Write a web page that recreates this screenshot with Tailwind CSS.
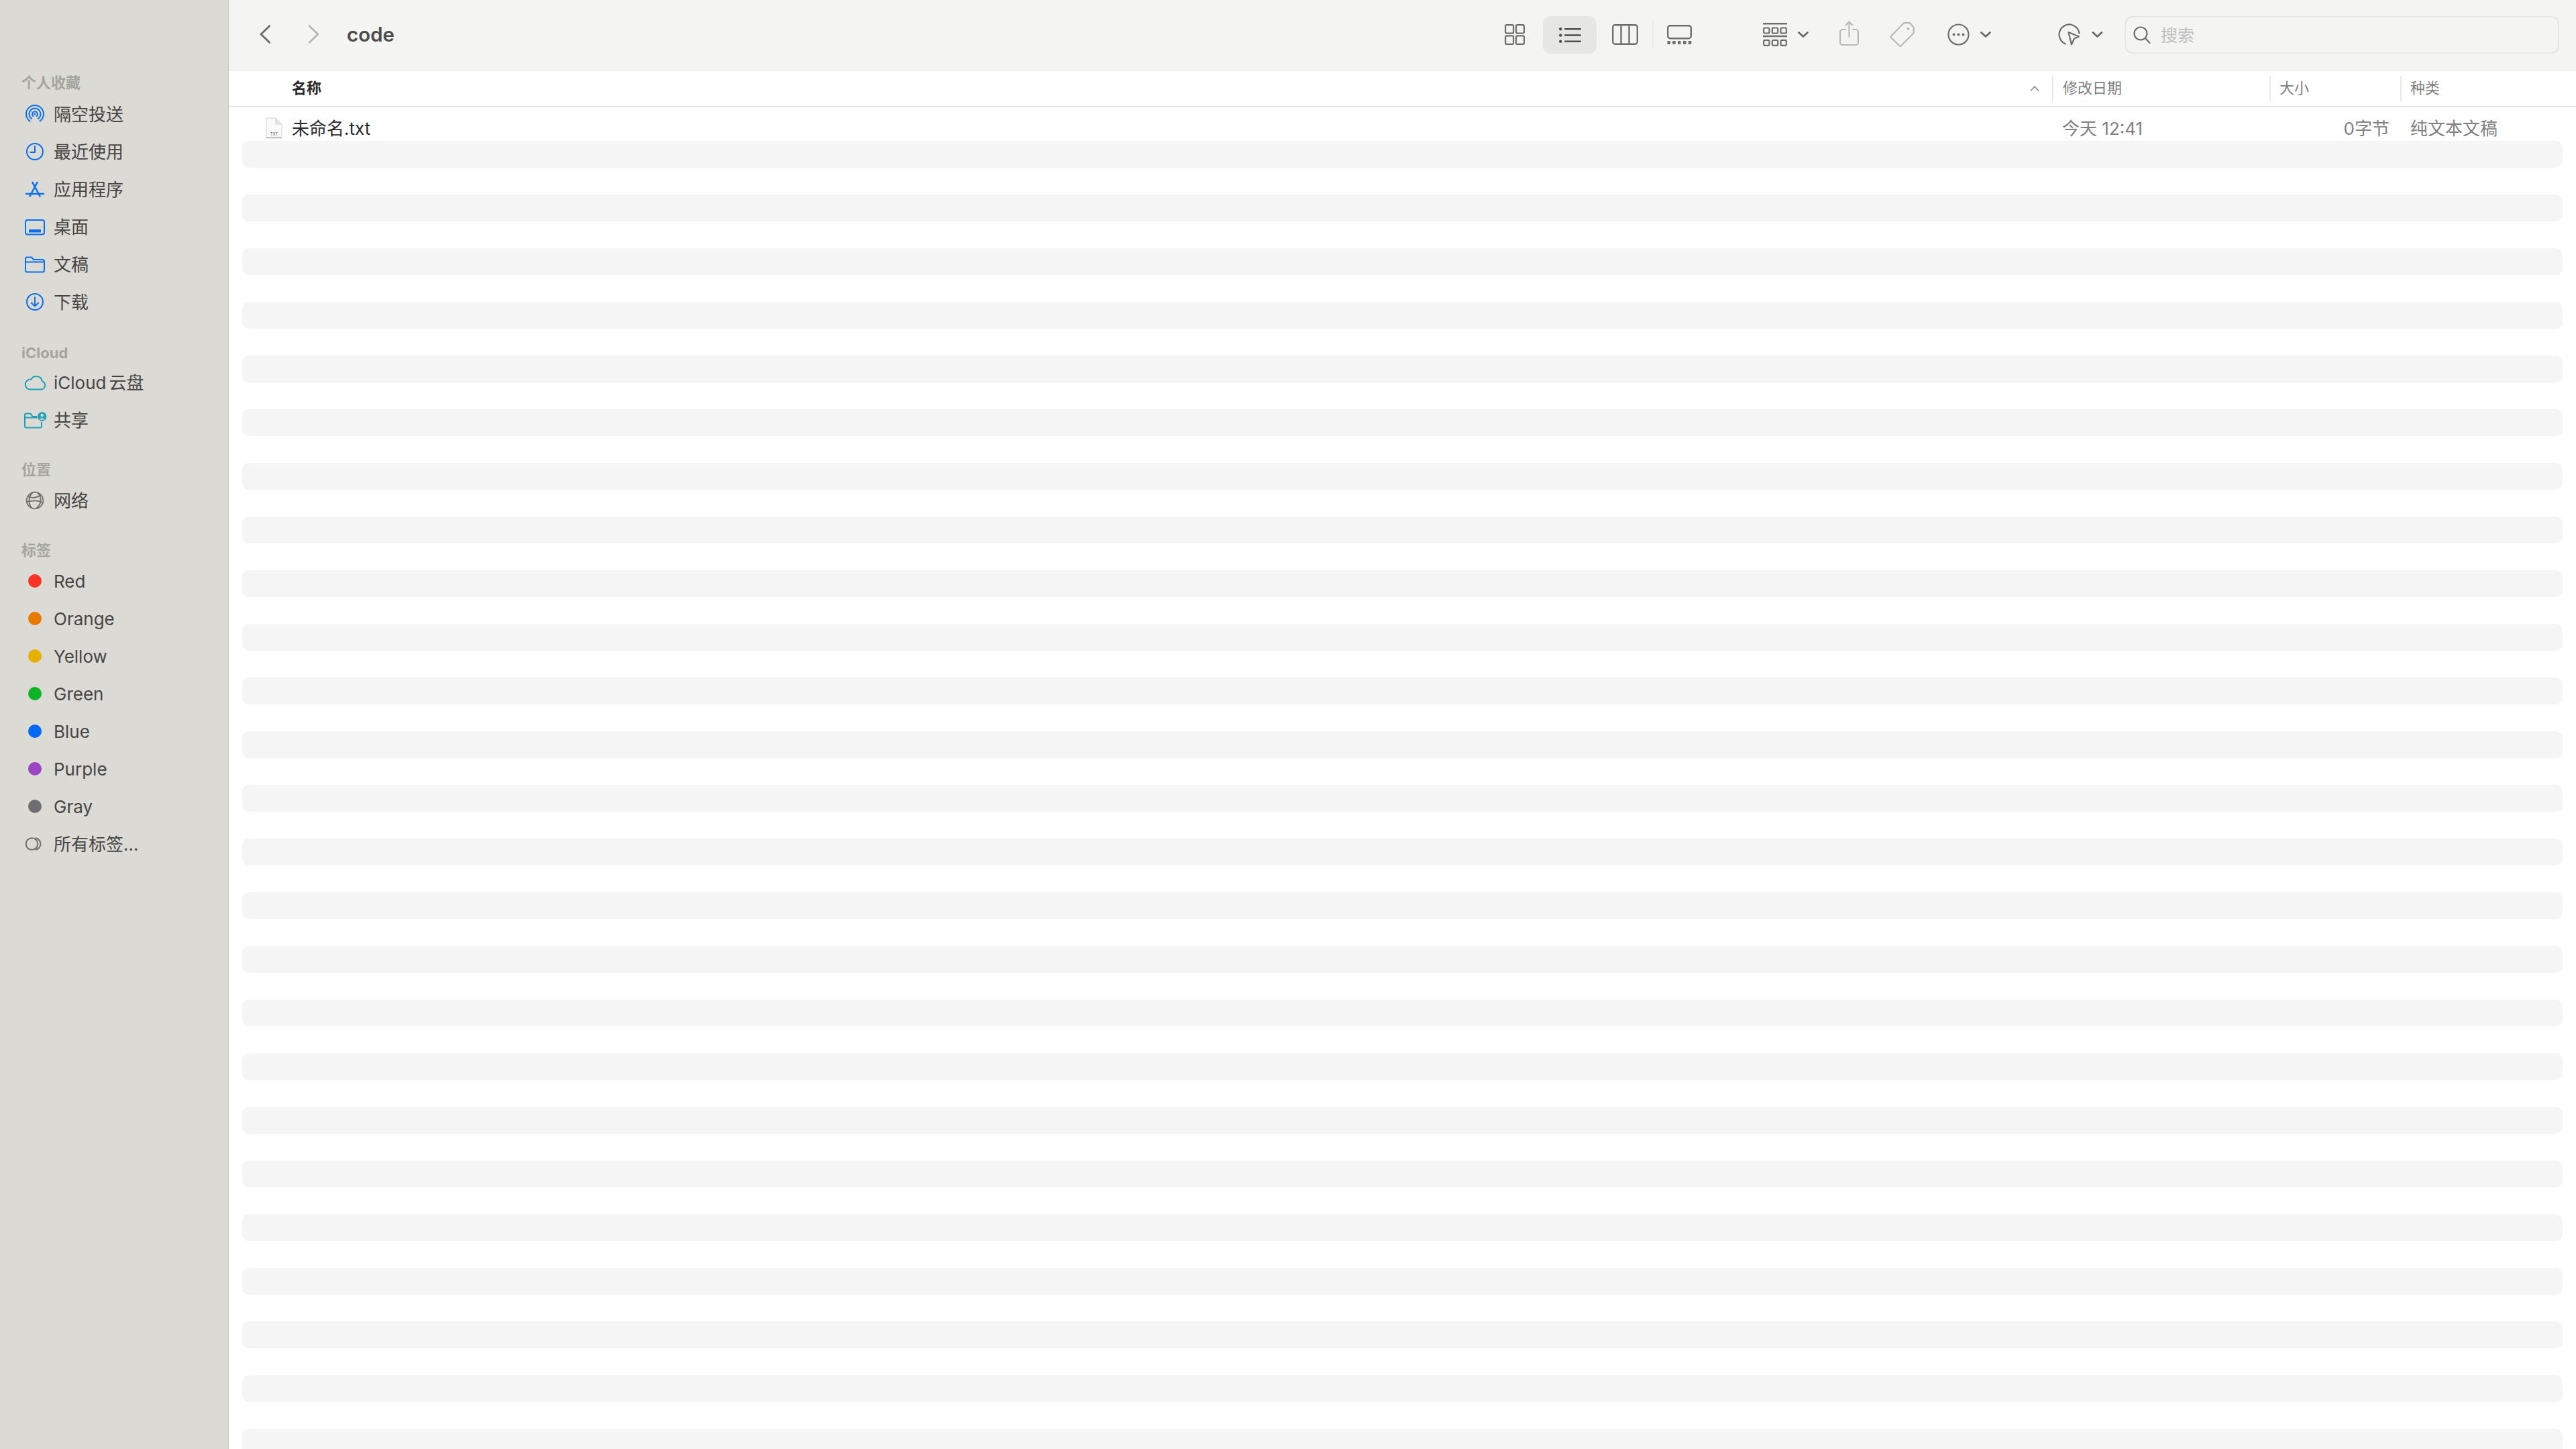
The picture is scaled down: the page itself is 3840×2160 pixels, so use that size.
<!DOCTYPE html>
<html lang="zh-CN">
<head>
<meta charset="UTF-8">
<title>code</title>
<script src="https://cdn.jsdelivr.net/npm/@tailwindcss/browser@4"></script>
</head>
<body class="bg-white h-[2160px] overflow-hidden flex font-['Inter','Noto_Sans_CJK_SC',sans-serif]">

<!-- Sidebar -->
<aside class="w-[341px] h-full shrink-0 bg-[#dbdad4] border-r border-[#c6c5be] pt-[107px] text-[26px] text-[#454543]">
  <div class="h-8 mb-[3px] pl-8 flex items-center text-[22px] font-bold text-[#a5a59f]">个人收藏</div>
  <div class="h-14 flex items-center">
    <svg class="ml-[34px] w-9 h-9 shrink-0" viewBox="0 0 36 36" fill="none" stroke="#0a6ff0" stroke-width="2" stroke-linecap="round"><path d="M10.5 28.6A13 13 0 1 1 25.5 28.6"/><path d="M13 24.9A8.5 8.5 0 1 1 23 24.9"/><path d="M15.4 21.2A4 4 0 1 1 20.6 21.2"/><circle cx="18" cy="18" r="1.6" fill="#0a6ff0" stroke="none"/></svg>
    <span class="ml-[10px]">隔空投送</span>
  </div>
  <div class="h-14 flex items-center">
    <svg class="ml-[34px] w-9 h-9 shrink-0" viewBox="0 0 36 36" fill="none" stroke="#0a6ff0" stroke-width="2" stroke-linecap="round" stroke-linejoin="round"><circle cx="18" cy="18" r="12"/><path d="M18 10V19H11.5"/></svg>
    <span class="ml-[10px]">最近使用</span>
  </div>
  <div class="h-14 flex items-center">
    <svg class="ml-[34px] w-9 h-9 shrink-0" viewBox="0 0 36 36" fill="none" stroke="#0a6ff0" stroke-width="2.6" stroke-linecap="round"><path d="M21.5 8L10.5 28.5"/><path d="M14.5 8L25.5 28.5"/><path d="M5 25H31"/></svg>
    <span class="ml-[10px]">应用程序</span>
  </div>
  <div class="h-14 flex items-center">
    <svg class="ml-[34px] w-9 h-9 shrink-0" viewBox="0 0 36 36" fill="none" stroke="#0a6ff0" stroke-width="2"><rect x="4" y="8" width="28" height="21.5" rx="3"/><rect x="9" y="22" width="18" height="4.5" rx="0.5" fill="#0a6ff0" stroke="none"/></svg>
    <span class="ml-[10px]">桌面</span>
  </div>
  <div class="h-14 flex items-center">
    <svg class="ml-[34px] w-9 h-9 shrink-0" viewBox="0 0 36 36" fill="none" stroke="#0a6ff0" stroke-width="2" stroke-linejoin="round"><path d="M4 10a2.5 2.5 0 0 1 2.5-2.5H13l3 3.5h13.5a2.5 2.5 0 0 1 2.5 2.5V27a2.5 2.5 0 0 1-2.5 2.5h-23A2.5 2.5 0 0 1 4 27Z"/><path d="M4 14.5H32"/></svg>
    <span class="ml-[10px]">文稿</span>
  </div>
  <div class="h-14 flex items-center">
    <svg class="ml-[34px] w-9 h-9 shrink-0" viewBox="0 0 36 36" fill="none" stroke="#0a6ff0" stroke-width="2" stroke-linecap="round" stroke-linejoin="round"><circle cx="18" cy="18" r="12"/><path d="M18 11V24.5M12.8 19.5L18 24.5L23.2 19.5"/></svg>
    <span class="ml-[10px]">下载</span>
  </div>

  <div class="h-8 mt-8 pl-8 flex items-center text-[22px] font-bold text-[#a5a59f]">iCloud</div>
  <div class="h-14 flex items-center">
    <svg class="ml-[34px] w-9 h-9 shrink-0" viewBox="0 0 36 36" fill="none" stroke="#22a0b8" stroke-width="2"><path d="M9.5 28.5H27a6.3 6.3 0 0 0 1.8-12.3A8.8 8.8 0 0 0 12.4 13.6A7.6 7.6 0 0 0 9.5 28.5Z"/></svg>
    <span class="ml-[10px]">iCloud<span class="ml-1">云盘</span></span>
  </div>
  <div class="h-14 flex items-center">
    <svg class="ml-[34px] w-9 h-9 shrink-0" viewBox="0 0 36 36" fill="none" stroke="#22a0b8" stroke-width="2" stroke-linejoin="round"><path d="M21 13H14.5L11.5 8.5H5a2 2 0 0 0-2 2V27.5a2 2 0 0 0 2 2H26a2 2 0 0 0 2-2V21"/><path d="M3 14.5H21.5"/><circle cx="28.7" cy="13" r="6.7" fill="#22a0b8" stroke="none"/><circle cx="28.7" cy="11" r="2.3" fill="#dbdad4" stroke="none"/><path d="M24.7 17.5a4.2 3.2 0 0 1 8 0Z" fill="#dbdad4" stroke="none"/></svg>
    <span class="ml-[10px]">共享</span>
  </div>

  <div class="h-8 mt-[30px] mb-[2px] pl-8 flex items-center text-[22px] font-bold text-[#a5a59f]">位置</div>
  <div class="h-14 flex items-center">
    <svg class="ml-[34px] w-9 h-9 shrink-0" viewBox="0 0 36 36" fill="none" stroke="#6f6f6d" stroke-width="1.8"><circle cx="18" cy="18" r="12.3"/><path d="M15 6C8 12 8 22 13 29.5"/><path d="M22 6.5C29 13 28 23 20 30"/><path d="M7 12C14 15.5 22 14 27 9.5"/><path d="M6 20C14 18 24 18 30 21"/></svg>
    <span class="ml-[10px]">网络</span>
  </div>

  <div class="h-8 mt-[30px] mb-[2px] pl-8 flex items-center text-[22px] font-bold text-[#a5a59f]">标签</div>
  <div class="h-14 flex items-center"><span class="ml-[42px] w-5 h-5 rounded-full bg-[#fa3327] shrink-0"></span><span class="ml-[18px]">Red</span></div>
  <div class="h-14 flex items-center"><span class="ml-[42px] w-5 h-5 rounded-full bg-[#e67a00] shrink-0"></span><span class="ml-[18px]">Orange</span></div>
  <div class="h-14 flex items-center"><span class="ml-[42px] w-5 h-5 rounded-full bg-[#e6b000] shrink-0"></span><span class="ml-[18px]">Yellow</span></div>
  <div class="h-14 flex items-center"><span class="ml-[42px] w-5 h-5 rounded-full bg-[#0cb527] shrink-0"></span><span class="ml-[18px]">Green</span></div>
  <div class="h-14 flex items-center"><span class="ml-[42px] w-5 h-5 rounded-full bg-[#0069f5] shrink-0"></span><span class="ml-[18px]">Blue</span></div>
  <div class="h-14 flex items-center"><span class="ml-[42px] w-5 h-5 rounded-full bg-[#9c45c4] shrink-0"></span><span class="ml-[18px]">Purple</span></div>
  <div class="h-14 flex items-center"><span class="ml-[42px] w-5 h-5 rounded-full bg-[#6e6e70] shrink-0"></span><span class="ml-[18px]">Gray</span></div>
  <div class="h-14 flex items-center">
    <svg class="ml-[34px] w-9 h-9 shrink-0" viewBox="0 0 36 36" fill="none" stroke="#6f6f6d" stroke-width="2"><circle cx="13.5" cy="18" r="8.8"/><path d="M19 9.3a8.8 8.8 0 0 1 0 17.4"/></svg>
    <span class="ml-[10px]">所有标签...</span>
  </div>
</aside>

<main class="flex-1 min-w-0 h-full flex flex-col overflow-hidden">
  <!-- Toolbar -->
  <header class="h-[105px] shrink-0 bg-[#f4f4f2] border-b border-[#dededc] flex items-center pb-[2px] pl-[46px] pr-[25px]">
    <svg class="w-4 h-7 shrink-0" viewBox="0 0 16 28" fill="none" stroke="#666664" stroke-width="2.6" stroke-linecap="round" stroke-linejoin="round"><path d="M15 1.5L2 14L15 26.5"/></svg>
    <svg class="ml-[57px] w-4 h-7 shrink-0" viewBox="0 0 16 28" fill="none" stroke="#b4b4b2" stroke-width="2.6" stroke-linecap="round" stroke-linejoin="round"><path d="M1 1.5L14 14L1 26.5"/></svg>
    <span class="ml-[41px] text-[29.5px] font-semibold text-[#4d4d4b]">code</span>
    <div class="flex-1"></div>

    <svg class="w-[30px] h-[31px] shrink-0" viewBox="0 0 30 31" fill="none" stroke="#6e6e6c" stroke-width="2.2"><rect x="1.1" y="1.1" width="12" height="12.5" rx="2"/><rect x="17" y="1.1" width="12" height="12.5" rx="2"/><rect x="1.1" y="17.4" width="12" height="12.5" rx="2"/><rect x="17" y="17.4" width="12" height="12.5" rx="2"/></svg>
    <div class="ml-[27px] mt-[2px] w-20 h-14 rounded-xl bg-[#e6e6e4] flex items-center justify-center shrink-0">
      <svg class="w-[33px] h-[23px]" viewBox="0 0 33 23" fill="#4d4d4b"><circle cx="2.2" cy="2.2" r="2.2"/><circle cx="2.2" cy="11.5" r="2.2"/><circle cx="2.2" cy="20.8" r="2.2"/><rect x="8" y="1" width="25" height="2.4" rx="1.2"/><rect x="8" y="10.3" width="25" height="2.4" rx="1.2"/><rect x="8" y="19.6" width="25" height="2.4" rx="1.2"/></svg>
    </div>
    <svg class="ml-[23px] w-[39px] h-[31px] shrink-0" viewBox="0 0 39 31" fill="none" stroke="#6e6e6c" stroke-width="2.4"><rect x="1.2" y="1.2" width="36.6" height="28.6" rx="3.5"/><path d="M13.5 1.2V29.8M25.5 1.2V29.8"/></svg>
    <div class="ml-[21px] w-0.5 h-10 bg-[#e8e8e6] shrink-0"></div>
    <svg class="ml-5 w-[37px] h-[29px] shrink-0" viewBox="0 0 37 29" fill="#6e6e6c"><rect x="1.2" y="1.2" width="34.6" height="19" rx="3.5" fill="none" stroke="#6e6e6c" stroke-width="2.4"/><rect x="0.5" y="24" width="4.5" height="5"/><rect x="8.2" y="24" width="4.5" height="5"/><rect x="16" y="24" width="4.5" height="5"/><rect x="24" y="24" width="4.5" height="5"/><rect x="31.8" y="24" width="4.5" height="5"/></svg>

    <svg class="ml-[106px] w-9 h-[35px] shrink-0" viewBox="0 0 36 35" fill="none" stroke="#6e6e6c" stroke-width="2.2"><path d="M0 1.2H36M0 20H36" stroke-width="2.4"/><rect x="1.1" y="7.5" width="8.4" height="8" rx="1.8"/><rect x="13.8" y="7.5" width="8.4" height="8" rx="1.8"/><rect x="26.5" y="7.5" width="8.4" height="8" rx="1.8"/><rect x="1.1" y="25.9" width="8.4" height="8" rx="1.8"/><rect x="13.8" y="25.9" width="8.4" height="8" rx="1.8"/><rect x="26.5" y="25.9" width="8.4" height="8" rx="1.8"/></svg>
    <svg class="ml-4 w-4 h-[9px] shrink-0" viewBox="0 0 16 9" fill="none" stroke="#666664" stroke-width="2.6" stroke-linecap="round" stroke-linejoin="round"><path d="M1.5 1.5L8 7.5L14.5 1.5"/></svg>

    <svg class="ml-[46px] mb-[3px] w-[29px] h-[37px] shrink-0" viewBox="0 0 29 37" fill="none" stroke="#b9b9b7" stroke-width="2.2" stroke-linecap="round" stroke-linejoin="round"><path d="M9 13H5a4 4 0 0 0-4 4V32a4 4 0 0 0 4 4H24a4 4 0 0 0 4-4V17a4 4 0 0 0-4-4H20"/><path d="M14.5 24V1.5M9.5 6.5L14.5 1.5L19.5 6.5"/></svg>
    <svg class="ml-[46px] w-[37px] h-[37px] shrink-0" viewBox="0 0 37 37" fill="none" stroke="#b9b9b7" stroke-width="2.2" stroke-linejoin="round"><path d="M21 1.2H30L35.8 8V16L16.5 35.5Q15.5 36.2 14.5 35.3L1.8 23Q1 22 1.8 21Z"/><circle cx="27.5" cy="10" r="2" fill="#b9b9b7" stroke="none"/></svg>
    <svg class="ml-[49px] w-[33px] h-[33px] shrink-0" viewBox="0 0 33 33" fill="none" stroke="#6e6e6c" stroke-width="2.2"><circle cx="16.5" cy="16.5" r="15"/><circle cx="9.5" cy="16.5" r="2" fill="#6e6e6c" stroke="none"/><circle cx="16.5" cy="16.5" r="2" fill="#6e6e6c" stroke="none"/><circle cx="23.5" cy="16.5" r="2" fill="#6e6e6c" stroke="none"/></svg>
    <svg class="ml-4 w-4 h-[9px] shrink-0" viewBox="0 0 16 9" fill="none" stroke="#666664" stroke-width="2.6" stroke-linecap="round" stroke-linejoin="round"><path d="M1.5 1.5L8 7.5L14.5 1.5"/></svg>

    <svg class="ml-[100px] w-[33px] h-[33px] shrink-0" viewBox="0 0 33 33" fill="none" stroke="#6e6e6c" stroke-width="2.2" stroke-linecap="round" stroke-linejoin="round"><path d="M31.5 14.5A15 15 0 1 0 11 30.5"/><path d="M15.5 13L31 19.5L24 22.5L20 31.5Z"/></svg>
    <svg class="ml-[17px] w-[17px] h-[9px] shrink-0" viewBox="0 0 16 9" fill="none" stroke="#666664" stroke-width="2.6" stroke-linecap="round" stroke-linejoin="round"><path d="M1.5 1.5L8 7.5L14.5 1.5"/></svg>

    <div class="ml-8 mt-[2px] w-[648px] h-14 shrink-0 rounded-xl border-2 border-[#e6e6e4] flex items-center pl-[11px]">
      <svg class="w-[26px] h-[26px] shrink-0" viewBox="0 0 26 26" fill="none" stroke="#6e6e6c" stroke-width="2.2" stroke-linecap="round"><circle cx="11" cy="11" r="9.5"/><path d="M18 18L24.5 25"/></svg>
      <span class="ml-[15px] mt-[3px] text-[25px] text-[#bdbdbb]">搜索</span>
    </div>
  </header>

  <!-- Column header -->
  <div class="h-[55px] shrink-0 border-b-2 border-[#e6e6e6] flex items-center text-[22px] text-[#808080]">
    <div class="flex-1 flex items-center justify-between pl-[94px] pr-[19px]">
      <span class="font-bold text-[#2a2a2a]">名称</span>
      <svg class="w-[14px] h-2" viewBox="0 0 14 8" fill="none" stroke="#8c8c8c" stroke-width="1.6"><path d="M1 7.5L7 1L13 7.5"/></svg>
    </div>
    <div class="w-[324px] h-[38px] flex items-center border-l-2 border-[#e9e9e9] pl-[14px]">修改日期</div>
    <div class="w-[195px] h-[38px] flex items-center border-l-2 border-[#e9e9e9] pl-[13px]">大小</div>
    <div class="w-[262px] h-[38px] flex items-center border-l-2 border-[#e9e9e9] pl-[13px]">种类</div>
  </div>

  <!-- File row -->
  <div class="h-[50px] shrink-0 pt-3 flex items-center text-[26px] text-[#808080]">
    <div class="flex-1 flex items-center pl-[55px]">
      <svg class="w-[25px] h-8 shrink-0" viewBox="0 0 25 32" fill="#fafafa" stroke="#cfcfcf" stroke-width="1" stroke-linejoin="round"><path d="M1 1H15L24 10V30.5H1Z"/><path d="M15 1V10H24" fill="#e4e4e4"/><path d="M1 30.5H24" stroke="#9b9b9b" stroke-width="1.4"/><text x="12.5" y="27" text-anchor="middle" font-size="6" fill="#666" stroke="none" font-family="Inter">TXT</text></svg>
      <span class="ml-[14px] text-[#2a2a2a]">未命名.txt</span>
    </div>
    <div class="w-[324px] pl-[15px]">今天 12:41</div>
    <div class="w-[195px] pr-4 text-right">0字节</div>
    <div class="w-[262px] pl-[15px]">纯文本文稿</div>
  </div>

  <!-- Alternating row stripes -->
  <div id="stripes" class="px-5"></div>
</main>

<script>
  const stripes = document.getElementById('stripes');
  for (let i = 0; i < 25; i++) {
    const row = document.createElement('div');
    row.className = 'h-10 mb-10 rounded-[10px] bg-[#f4f5f4]';
    stripes.appendChild(row);
  }
</script>
</body>
</html>
